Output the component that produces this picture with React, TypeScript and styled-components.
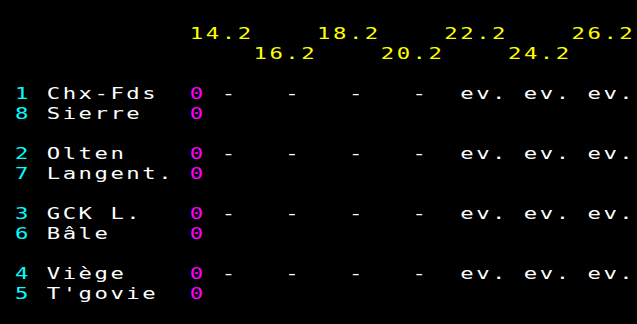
import React from "react";
import styled, { createGlobalStyle } from "styled-components";

const CELL = 15.925;
const STRETCH = 1.35;

const GlobalStyle = createGlobalStyle`
  html, body {
    margin: 0;
    padding: 0;
    background: #000000;
  }
  body {
    width: 637px;
    height: 324px;
    overflow: hidden;
  }
`;

const Screen = styled.div`
  width: ${637 / STRETCH}px;
  padding-top: 24px;
  margin-left: -1px;
  transform: scaleX(${STRETCH});
  transform-origin: 0 0;
  font-family: "DejaVu Sans Mono", "Liberation Mono", monospace;
  font-size: 16.5px;
  line-height: 20px;
  letter-spacing: ${CELL / STRETCH - 16.5 * 0.602}px;
  color: #ffffff;
`;

const Line = styled.div`
  display: grid;
  grid-template-columns: repeat(40, ${CELL / STRETCH}px);
  height: 20px;
  white-space: pre;
`;

const Cell = styled.span<{ $col: number; $len: number; $color?: string }>`
  grid-column: ${(p) => p.$col + 1} / span ${(p) => p.$len};
  color: ${(p) => p.$color || "#ffffff"};
`;

const YELLOW = "#ffff00";
const CYAN = "#00ffff";
const MAGENTA = "#ff00ff";

const Text = ({ col, text, color }: { col: number; text: string; color?: string }) => (
  <Cell $col={col} $len={text.length} $color={color}>
    {text}
  </Cell>
);

const pairs: [number, string, number, string][] = [
  [1, "Chx-Fds", 8, "Sierre"],
  [2, "Olten", 7, "Langent."],
  [3, "GCK L.", 6, "Bâle"],
  [4, "Viège", 5, "T'govie"],
];

export default function App() {
  return (
    <>
      <GlobalStyle />
      <Screen>
        <Line>
          <Text col={12} text="14.2" color={YELLOW} />
          <Text col={20} text="18.2" color={YELLOW} />
          <Text col={28} text="22.2" color={YELLOW} />
          <Text col={36} text="26.2" color={YELLOW} />
        </Line>
        <Line>
          <Text col={16} text="16.2" color={YELLOW} />
          <Text col={24} text="20.2" color={YELLOW} />
          <Text col={32} text="24.2" color={YELLOW} />
        </Line>
        {pairs.map(([r1, t1, r2, t2]) => (
          <React.Fragment key={r1}>
            <Line />
            <Line>
              <Text col={1} text={String(r1)} color={CYAN} />
              <Text col={3} text={t1} />
              <Text col={12} text="0" color={MAGENTA} />
              {[14, 18, 22, 26].map((c) => (
                <Text key={c} col={c} text="-" />
              ))}
              {[29, 33, 37].map((c) => (
                <Text key={c} col={c} text="ev." />
              ))}
            </Line>
            <Line>
              <Text col={1} text={String(r2)} color={CYAN} />
              <Text col={3} text={t2} />
              <Text col={12} text="0" color={MAGENTA} />
            </Line>
          </React.Fragment>
        ))}
      </Screen>
    </>
  );
}
